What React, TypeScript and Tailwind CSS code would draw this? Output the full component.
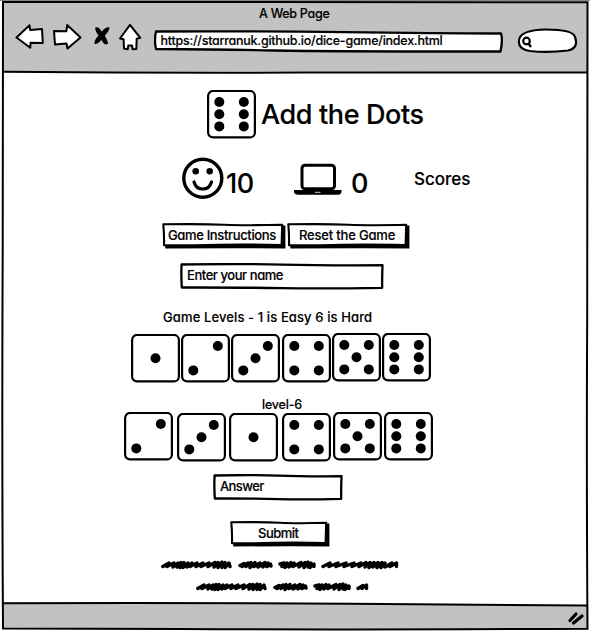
import type { ReactNode } from "react";

const PIPS: Record<number, [number, number][]> = {
  1: [[24.5, 24.2]],
  2: [[36.8, 12], [12.3, 36.4]],
  3: [[36.8, 12], [24.5, 24.2], [12.3, 36.4]],
  4: [[12.3, 12], [36.8, 12], [12.3, 36.4], [36.8, 36.4]],
  5: [[12.3, 12], [36.8, 12], [24.5, 24.2], [12.3, 36.4], [36.8, 36.4]],
  6: [[12.3, 12], [36.8, 12], [12.3, 24.2], [36.8, 24.2], [12.3, 36.4], [36.8, 36.4]],
};

function Die({ n, className = "" }: { n: number; className?: string }) {
  return (
    <svg viewBox="0 0 49 49" className={`h-[49px] w-[49px] shrink-0 ${className}`}>
      <rect x="1.1" y="1" width="46.8" height="46.4" rx="5" fill="white" stroke="black" strokeWidth="2.2" />
      {PIPS[n].map(([x, y], i) => (
        <circle key={i} cx={x} cy={y} r="5" />
      ))}
    </svg>
  );
}

function Sketch({ w, h, children, text, className }: { w: number; h: number; children: ReactNode; text: ReactNode; className: string }) {
  return (
    <div className={`grid shrink-0 ${className}`}>
      <svg viewBox={`0 0 ${w} ${h}`} className="col-start-1 row-start-1 h-full w-full" fill="none" stroke="black" strokeLinejoin="round" strokeLinecap="round">
        {children}
      </svg>
      <div className="col-start-1 row-start-1 whitespace-nowrap">{text}</div>
    </div>
  );
}

function ButtonShape({ w }: { w: number }) {
  return (
    <>
      <path d={`M3.3 21 L${w - 4} 21 L${w - 4} 2.6 H${w - 0.6} V25.4 Q${w / 2} 25 3.3 25.6Z`} fill="black" stroke="none" />
      <path d={`M1.3 1.3 Q${w / 3} .8 ${w / 2} 1.7 T${w - 3.8} 1.8 L${w - 4.4} 22 Q${w * 0.65} 21.2 ${w * 0.45} 21.8 T2 22.3 Q2.3 12 1.3 1.3Z`} fill="white" strokeWidth="2.1" />
    </>
  );
}

function FieldShape({ w }: { w: number }) {
  return (
    <path d={`M1.6 1.5 Q${w * 0.3} .7 ${w * 0.5} 1.6 T${w - 1.5} 2.2 Q${w - 2} 16 ${w - 1.8} 24.8 Q${w * 0.7} 25.8 ${w * 0.5} 25.1 T1.8 24.5 Q1 12 1.6 1.5Z`} fill="white" strokeWidth="2.3" />
  );
}

const LONG = "M1.8 7.5 L8 4 L6 7.5 L13 4 L12 8 L17 4 L16 8 L20 3.5 L19 8.5 L23 3.5 L22 8.5 L27 4 L26 8 L31 4 L29 7.5 L36 4 L35 7.5 L42 4 L40 7.5 L48 4 L47 7.5 L54 3.5 L53 8 L57 3.5 L57 8.5 L61 3 L61 8.5 L64 3.5 L64 8.5 L68 4 L69 7.5";
const SHORT = "M2 6.5 L6 4.5 L4 7.5 L10 4 L8 7.5 L13 3.5 L12 8.5 L17 3.5 L16 7.5 L22 4 L20 8 L27 3.5 L25 8 L30 4 L29 7.5 L32.5 5 L33 7";
const MID = "M2 5 L6 4 L4 7.5 L9 4 L7 8.5 L13 3.5 L11 8 L16 4 L15 7.5 L23 3.5 L21 8 L27 3.5 L26 8.5 L30 3 L30 8 L33 4 L32 8.5 L36 5 L36 7.5";
const WIDE = "M2 7.5 L9 4 L8 7.5 L17 4 L15 7.5 L25 4 L23 7.5 L33 4 L31 7.5 L40 4 L38 7.5 L45 3.5 L44 8 L49 3.5 L48 8.5 L53 3.5 L52 8 L57 3.5 L56 8.5 L61 3.5 L60 8.5 L64 4 L64 8 L71 4 L69 7.5 L75.5 4 L75.5 7.5";

function Scribble({ d, w, className }: { d: string; w: number; className: string }) {
  return (
    <svg viewBox={`0 0 ${w} 12`} className={`h-3 shrink-0 ${className}`} fill="none" stroke="black" strokeWidth="3.4" strokeLinecap="round" strokeLinejoin="round">
      <path d={d} />
    </svg>
  );
}

export default function App() {
  return (
    <div className="grid h-[631px] w-[590px] overflow-hidden bg-white font-['Inter','Liberation_Sans',sans-serif] font-medium text-black [-webkit-text-stroke:0.15px_black] [font-feature-settings:'cv11']">
      <svg viewBox="0 0 590 631" className="col-start-1 row-start-1 h-[631px] w-[590px]" fill="none" stroke="black" strokeWidth="2">
        <path d="M3 2 H587 V72.5 Q300 71 3 72Z" fill="#c2c2c2" stroke="none" />
        <path d="M3 603 Q200 602 400 604 T587 605.5 V629 H3Z" fill="#c2c2c2" stroke="none" />
        <path d="M0 .5 H590" stroke="#858585" strokeWidth="1" />
        <path d="M3 2 L587.5 2.2 Q588 180 587.2 320 T587.5 628.7 Q330 630 180 629 L3 628.5 Q1.8 450 2.7 250Z" />
        <path d="M3 71.8 Q150 73 300 72.6 T587 72.5" />
        <path d="M3 603.2 Q170 602.4 350 603.7 T587 605.6" />
        <path d="M570 620.5 L576 614 M573.5 623 L582 616" strokeWidth="3.2" strokeLinecap="round" />
      </svg>

      <div className="col-start-1 row-start-1 flex min-w-0 flex-col">
        <header className="h-[73px] shrink-0">
          <div className="h-[24px] pt-[4px] pl-[259px] text-[12.5px] leading-[20px] tracking-[-0.28px] whitespace-nowrap">A Web Page</div>
          <div className="flex pl-[15px]">
            <svg viewBox="15 24 127 28" className="h-[28px] w-[127px] shrink-0" fill="white" stroke="black" strokeWidth="2" strokeLinejoin="round">
              <path d="M16.5 37.5 L29.5 25.2 L30.2 30 L42 29 L42.8 43 L30.5 42.8 L30.3 47.7Z" />
              <path d="M54 31 L66.3 31.3 L67.2 25 L80.5 37.5 L67.5 48.5 L66.5 43.5 L55 44.5Z" />
              <path d="M95 27.8 Q97.5 26.5 99.5 28.5 L102 31.8 Q104.5 27 109.5 27.3 Q109.5 31 104.8 35.5 Q107.5 40.5 108.2 43.5 Q105.5 45.5 103.3 43 L101.3 39.8 Q98.5 44.5 94.3 43.8 Q94.5 39.5 98.6 35.5 Q95.2 31.5 95 27.8Z" fill="black" stroke="none" />
              <path d="M130 24.8 L140.3 37.8 L136.7 38.8 L136.3 49 L132.7 49.3 L132 45.5 L128.3 45.5 L127.8 49.2 L124 48.5 L123.6 39.3 L120 38.5 Q124 33 130 24.8Z" />
            </svg>
            <Sketch w={350} h={23} className="mt-[6px] ml-[12px] h-[23px] w-[350px]" text={<div className="pt-px pl-[6.5px] text-[12.5px] leading-[20px] tracking-[-0.25px]">https://starranuk.github.io/dice-game/index.html</div>}>
              <path d="M2 1.5 Q100 1 190 2.2 T347 3.5 Q349 10 346.5 21.5 Q170 21.5 120 20.5 T2 19 Q0 10 2 1.5Z" fill="white" strokeWidth="2.3" />
            </Sketch>
            <svg viewBox="517 28 61 26" className="mt-[4px] ml-[13px] h-[26px] w-[61px] shrink-0" fill="white" stroke="black" strokeWidth="2.2">
              <path d="M519 41 Q519 30 546 29.5 Q573 29.5 575 37 Q579 48 568 50.5 Q547 53 530 51 Q518 49 519 41Z" />
              <circle cx="526.5" cy="41" r="3.3" />
              <path d="M528.5 43.5 L531 47" strokeWidth="2.5" />
            </svg>
          </div>
        </header>

        <main className="flex h-[530px] shrink-0 flex-col">
          <div className="mt-[17px] flex h-[49px] pl-[207px]">
            <Die n={6} />
            <h1 className="ml-[5px] pt-[7px] text-[27px] leading-[36px] font-medium tracking-[-0.38px] whitespace-nowrap">Add the Dots</h1>
          </div>

          <div className="mt-[18px] flex h-[44px] pl-[181px]">
            <svg viewBox="0 0 44 44" className="h-[44px] w-[44px] shrink-0" fill="none" stroke="black">
              <circle cx="21.8" cy="21.2" r="19" strokeWidth="3.4" />
              <g fill="black" stroke="none"><circle cx="14.7" cy="14.2" r="3.3" /><circle cx="28.7" cy="14.2" r="3.3" /></g>
              <path d="M13 25 Q15 32 21.7 32 T30.5 25" strokeWidth="3.2" strokeLinecap="round" />
            </svg>
            <div className="ml-px w-[68px] pt-[9px] text-[27px] leading-[36px] tracking-[-0.5px]">10</div>
            <svg viewBox="0 0 48 36" className="mt-[4px] h-[36px] w-[48px] shrink-0">
              <rect x="8" y="4.2" width="32.5" height="23.5" rx="3" fill="none" stroke="black" strokeWidth="3" />
              <path d="M0 29 H47.5 V31 Q47 33.8 44 33.8 H4 Q.5 33.8 0 31Z" />
              <path d="M21 31.3 H26.5" stroke="white" strokeWidth=".8" />
            </svg>
            <div className="ml-[9px] w-[63px] pt-[9px] text-[27px] leading-[36px] tracking-[-0.5px]">0</div>
            <div className="pt-[10px] text-[17px] leading-[24px]">Scores</div>
          </div>

          <div className="mt-[22px] flex h-[26px] pl-[162px]">
            <Sketch w={124} h={26} className="h-[26px] w-[124px]" text={<div className="pt-[2px] pl-[6px] text-[13px] leading-[20px] tracking-[-0.35px]">Game Instructions</div>}><ButtonShape w={124} /></Sketch>
            <Sketch w={123} h={26} className="ml-[1px] h-[26px] w-[123px]" text={<div className="pt-[2px] pl-[12px] text-[13px] leading-[20px] tracking-[-0.18px]">Reset the Game</div>}><ButtonShape w={123} /></Sketch>
          </div>
          <div className="mt-[14px] flex h-[26px] pl-[180px]">
            <Sketch w={204} h={27} className="h-[27px] w-[204px]" text={<div className="pt-[2px] pl-[7px] text-[13px] leading-[20px] tracking-[-0.43px]">Enter your name</div>}><FieldShape w={204} /></Sketch>
          </div>

          <div className="mt-[18px] h-[20px] pl-[163px] text-[13px] leading-[20px] tracking-[0.11px] whitespace-nowrap">Game Levels - 1 is Easy 6 is Hard</div>
          <div className="mt-[6px] flex h-[49px] pl-[130.5px]">
            <Die n={1} className="mt-px" />
            <Die n={2} className="mt-px ml-[1px]" />
            <Die n={3} className="mt-px ml-[1px]" />
            <Die n={4} className="mt-px ml-[2px]" />
            <Die n={5} className="ml-[1px]" />
            <Die n={6} className="ml-[1px]" />
          </div>

          <div className="mt-[13px] h-[17px] pl-[262px] text-[12.5px] leading-[20px] tracking-[-0.2px] whitespace-nowrap">level-6</div>
          <div className="flex h-[49px] pl-[123.5px]">
            <Die n={2} />
            <Die n={3} className="mt-px ml-[4px]" />
            <Die n={1} className="mt-px ml-[3px]" />
            <Die n={4} className="mt-px ml-[4px]" />
            <Die n={5} className="ml-[2px]" />
            <Die n={6} className="ml-[2px]" />
          </div>

          <div className="mt-[13px] flex h-[26px] pl-[213px]">
            <Sketch w={130} h={27} className="h-[27px] w-[130px]" text={<div className="pt-[2px] pl-[7px] text-[13px] leading-[20px] tracking-[-0.6px]">Answer</div>}><FieldShape w={130} /></Sketch>
          </div>
          <div className="mt-[21px] flex h-[26px] pl-[230px]">
            <Sketch w={100} h={26} className="h-[26px] w-[100px]" text={<div className="pt-[2px] pl-[28px] text-[13px] leading-[20px] tracking-[-0.5px]">Submit</div>}><ButtonShape w={100} /></Sketch>
          </div>

          <div className="mt-[12px] flex h-3 pl-[161px]">
            <Scribble d={LONG} w={71} className="w-[71px]" />
            <Scribble d={SHORT} w={35} className="ml-[6px] w-[35px]" />
            <Scribble d={MID} w={38} className="ml-[5px] w-[38px]" />
            <Scribble d={WIDE} w={78} className="ml-[5px] w-[78px]" />
          </div>
          <div className="mt-[10px] flex h-3 pl-[196px]">
            <Scribble d={LONG} w={71} className="w-[71px]" />
            <Scribble d={SHORT} w={35} className="ml-[6px] w-[35px]" />
            <Scribble d={MID} w={38} className="ml-[5px] w-[38px]" />
            <Scribble d="M2 7.5 L7 4.5 L6 7.5 L10.5 4 L10.5 7.5" w={13} className="ml-[5px] w-[13px]" />
          </div>
        </main>
      </div>
    </div>
  );
}
